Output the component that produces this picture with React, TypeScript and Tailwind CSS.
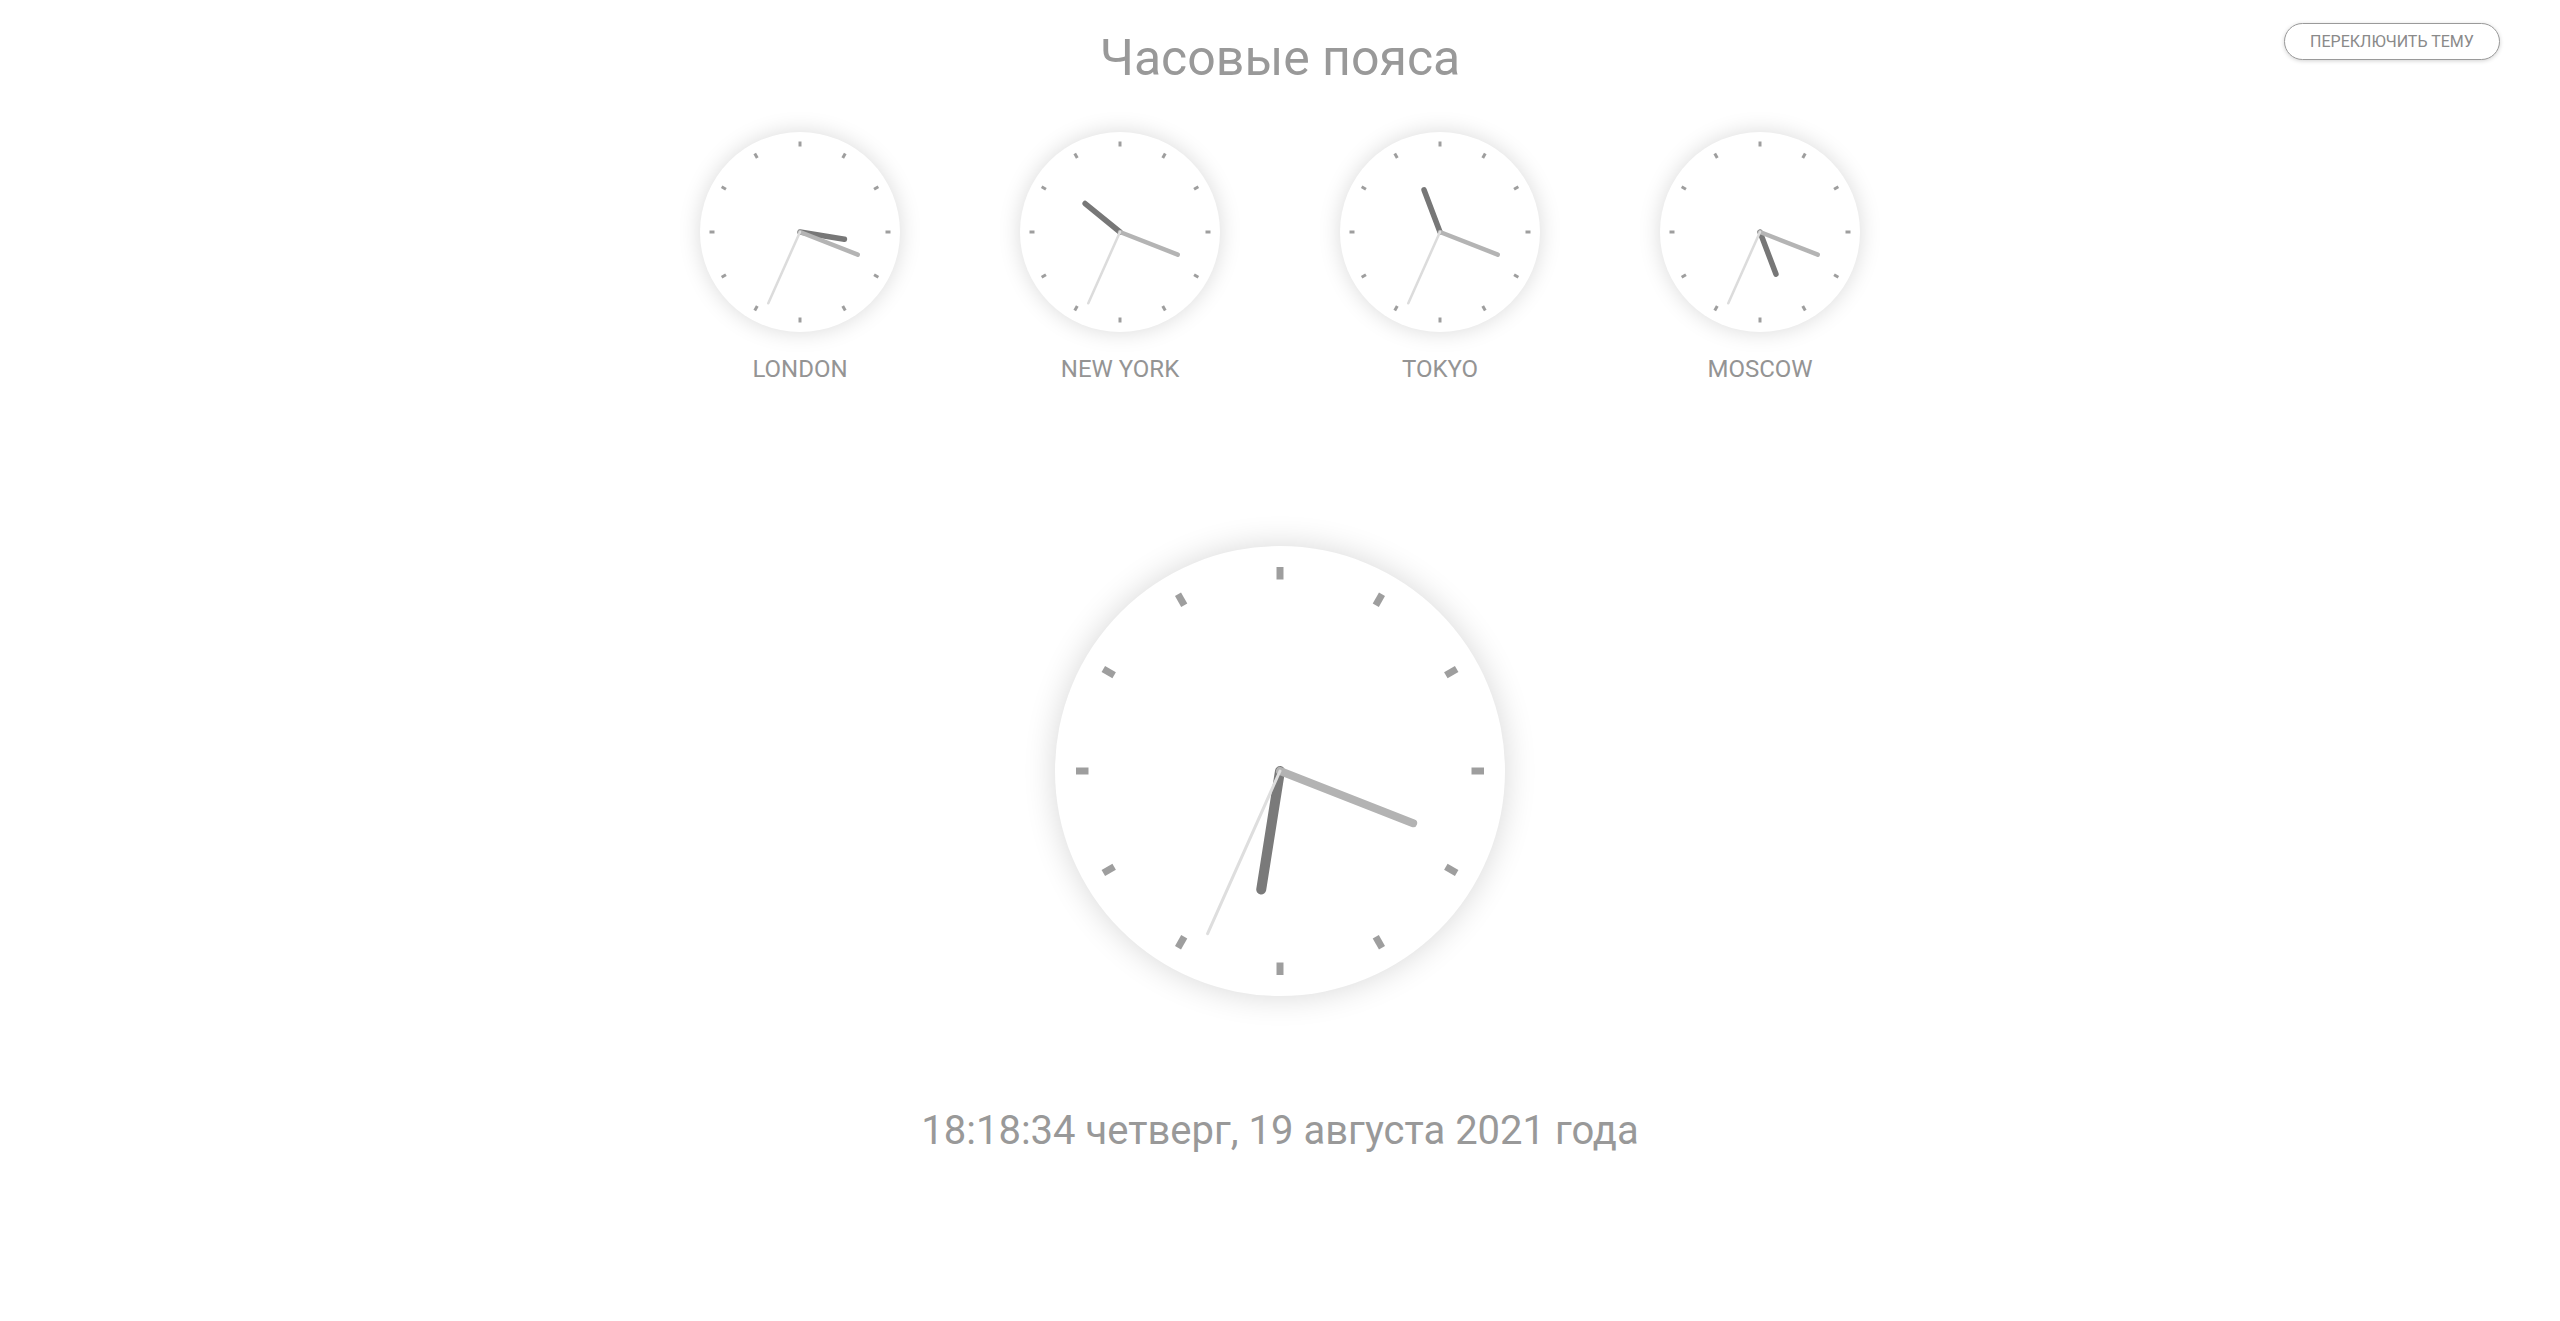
import React from 'react';

type Hand = { angle: number; length: number; width: number; color: string };

type ClockProps = {
  size: number;
  tickFrom: number;
  tickTo: number;
  tickWidth: number;
  hands: Hand[];
  big?: boolean;
};

const point = (angle: number, r: number) => {
  const rad = (angle * Math.PI) / 180;
  return { x: Math.sin(rad) * r, y: -Math.cos(rad) * r };
};

const Clock = ({ size, tickFrom, tickTo, tickWidth, hands, big }: ClockProps) => {
  const r = size / 2;
  return (
    <div
      className={
        big
          ? 'rounded-full bg-white shadow-[0_0_32px_rgba(0,0,0,0.16)]'
          : 'rounded-full bg-white shadow-[0_0_22px_rgba(0,0,0,0.15)]'
      }
      style={{ width: size, height: size }}
    >
      <svg width={size} height={size} viewBox={`${-r} ${-r} ${size} ${size}`}>
        {Array.from({ length: 12 }).map((_, i) => {
          const a = point(i * 30, tickFrom);
          const b = point(i * 30, tickTo);
          return (
            <line key={i} x1={a.x} y1={a.y} x2={b.x} y2={b.y} stroke="#9e9e9e" strokeWidth={tickWidth} />
          );
        })}
        {hands.map((h, i) => {
          const e = point(h.angle, h.length);
          return (
            <line
              key={i}
              x1={0}
              y1={0}
              x2={e.x}
              y2={e.y}
              stroke={h.color}
              strokeWidth={h.width}
              strokeLinecap="round"
            />
          );
        })}
      </svg>
    </div>
  );
};

const smallHands = (hourAngle: number): Hand[] => [
  { angle: hourAngle, length: 45, width: 5.5, color: '#777777' },
  { angle: 111.4, length: 62, width: 4.5, color: '#b4b4b4' },
  { angle: 204, length: 78, width: 2.5, color: '#dcdcdc' },
];

const cities = [
  { name: 'LONDON', hour: 99.25 },
  { name: 'NEW YORK', hour: 309.25 },
  { name: 'TOKYO', hour: 339.25 },
  { name: 'MOSCOW', hour: 159.25 },
];

export default function App() {
  return (
    <div className="relative min-h-screen bg-white font-['Roboto','Liberation_Sans',sans-serif] text-[#999]">
      {/* theme switch */}
      <button className="absolute top-[23px] right-[60px] w-[216px] h-[37px] rounded-full border border-[#9a9a9a] bg-white text-[16px] text-[#8a8a8a] uppercase shadow-[0_1px_4px_rgba(0,0,0,0.18)]">
        Переключить тему
      </button>

      <div className="flex flex-col items-center">
        <h1 className="pt-[28px] text-[50px] leading-[60px] font-normal">Часовые пояса</h1>

        <div className="mt-[44px] flex gap-[120px]">
          {cities.map((c) => (
            <div key={c.name} className="flex flex-col items-center">
              <Clock size={200} tickFrom={85.5} tickTo={90.5} tickWidth={3} hands={smallHands(c.hour)} />
              <div className="mt-[23px] text-[24px] leading-[28px] text-[#949494]">{c.name}</div>
            </div>
          ))}
        </div>

        <div className="mt-[163px]">
          <Clock
            big
            size={450}
            tickFrom={191.5}
            tickTo={204}
            tickWidth={7}
            hands={[
              { angle: 189, length: 120, width: 10, color: '#7a7a7a' },
              { angle: 111.4, length: 143, width: 8, color: '#b3b3b3' },
              { angle: 204, length: 178, width: 3, color: '#dedede' },
            ]}
          />
        </div>

        <div className="mt-[111px] text-[40px] leading-[47px]">18:18:34 четверг, 19 августа 2021 года</div>
      </div>
    </div>
  );
}
